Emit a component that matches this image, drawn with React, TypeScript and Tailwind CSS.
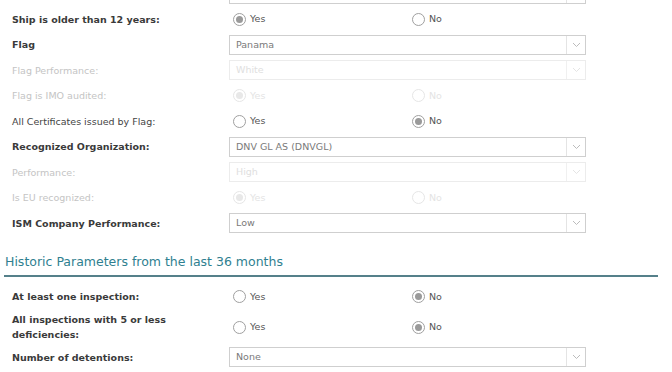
import React from "react";

const font = { fontFamily: '"DejaVu Sans", Verdana, sans-serif' };

function Chevron({ disabled }: { disabled?: boolean }) {
  return (
    <svg width="9" height="6" viewBox="0 0 9 6" fill="none">
      <path d="M1 1 L4.5 4.5 L8 1" stroke={disabled ? "#e4e4e4" : "#bcbcbc"} strokeWidth="1" />
    </svg>
  );
}

function Select({ value, disabled }: { value: string; disabled?: boolean }) {
  return (
    <div
      className={`flex h-[20px] w-[357px] items-stretch border bg-white ${
        disabled ? "border-[#ececec]" : "border-[#cfcfcf]"
      }`}
    >
      <div className={`flex flex-1 items-center pl-[6px] text-[9.5px] ${disabled ? "text-[#e0e0e0]" : "text-[#7a7a7a]"}`}>
        {value}
      </div>
      <div className={`flex w-[19px] items-center justify-center border-l ${disabled ? "border-[#f0f0f0]" : "border-[#e4e4e4]"}`}>
        <Chevron disabled={disabled} />
      </div>
    </div>
  );
}

function Radio({ checked, label, disabled }: { checked?: boolean; label: string; disabled?: boolean }) {
  return (
    <div className="flex items-center gap-[4px]">
      <div
        className={`flex h-[13px] w-[13px] items-center justify-center rounded-full border ${
          disabled ? "border-[#e6e6e6]" : "border-[#a0a0a0]"
        }`}
      >
        {checked && <div className={`h-[7px] w-[7px] rounded-full ${disabled ? "bg-[#e8e8e8]" : "bg-[#9a9a9a]"}`} />}
      </div>
      <span className={`text-[9.5px] ${disabled ? "text-[#e4e4e4]" : "text-[#555]"}`}>{label}</span>
    </div>
  );
}

function Radios({ yes, disabled }: { yes: boolean; disabled?: boolean }) {
  return (
    <div className="flex items-center">
      <div className="w-[183px] pl-[4px]">
        <Radio checked={yes} label="Yes" disabled={disabled} />
      </div>
      <Radio checked={!yes} label="No" disabled={disabled} />
    </div>
  );
}

type Kind = "bold" | "normal" | "disabled";

function Row({ label, kind, children, h = "h-[25.5px]" }: { label: React.ReactNode; kind: Kind; children: React.ReactNode; h?: string }) {
  const cls =
    kind === "bold"
      ? "font-bold text-[#3a3a3a]"
      : kind === "disabled"
      ? "text-[#c4c4c4]"
      : "text-[#444]";
  return (
    <div className={`flex items-center ${h}`}>
      <div className={`w-[229px] shrink-0 pl-[12px] pr-[55px] text-[9.5px] leading-[15px] ${cls}`}>{label}</div>
      <div>{children}</div>
    </div>
  );
}

export default function App() {
  return (
    <div className="h-[372px] w-[672px] overflow-hidden bg-white" style={font}>
      <div className="-mt-[19px]">
        <Row label="" kind="normal">
          <Select value="" />
        </Row>
        <Row label="Ship is older than 12 years:" kind="bold">
          <Radios yes={true} />
        </Row>
        <Row label="Flag" kind="bold">
          <Select value="Panama" />
        </Row>
        <Row label="Flag Performance:" kind="disabled">
          <Select value="White" disabled />
        </Row>
        <Row label="Flag is IMO audited:" kind="disabled">
          <Radios yes={true} disabled />
        </Row>
        <Row label="All Certificates issued by Flag:" kind="normal">
          <Radios yes={false} />
        </Row>
        <Row label="Recognized Organization:" kind="bold">
          <Select value="DNV GL AS (DNVGL)" />
        </Row>
        <Row label="Performance:" kind="disabled">
          <Select value="High" disabled />
        </Row>
        <Row label="Is EU recognized:" kind="disabled">
          <Radios yes={true} disabled />
        </Row>
        <Row label="ISM Company Performance:" kind="bold">
          <Select value="Low" />
        </Row>
      </div>
      <div className="ml-[4px] mr-[14px] mt-[17px] border-b-2 border-[#55808a] pb-[3px] pl-[1px] text-[12.5px] text-[#2f7f90]">
        Historic Parameters from the last 36 months
      </div>
      <div className="mt-[7px]">
        <Row label="At least one inspection:" kind="bold" h="h-[26px]">
          <Radios yes={false} />
        </Row>
        <Row label="All inspections with 5 or less deficiencies:" kind="bold" h="h-[35px]">
          <Radios yes={false} />
        </Row>
        <Row label="Number of detentions:" kind="bold" h="h-[25px]">
          <Select value="None" />
        </Row>
      </div>
    </div>
  );
}
